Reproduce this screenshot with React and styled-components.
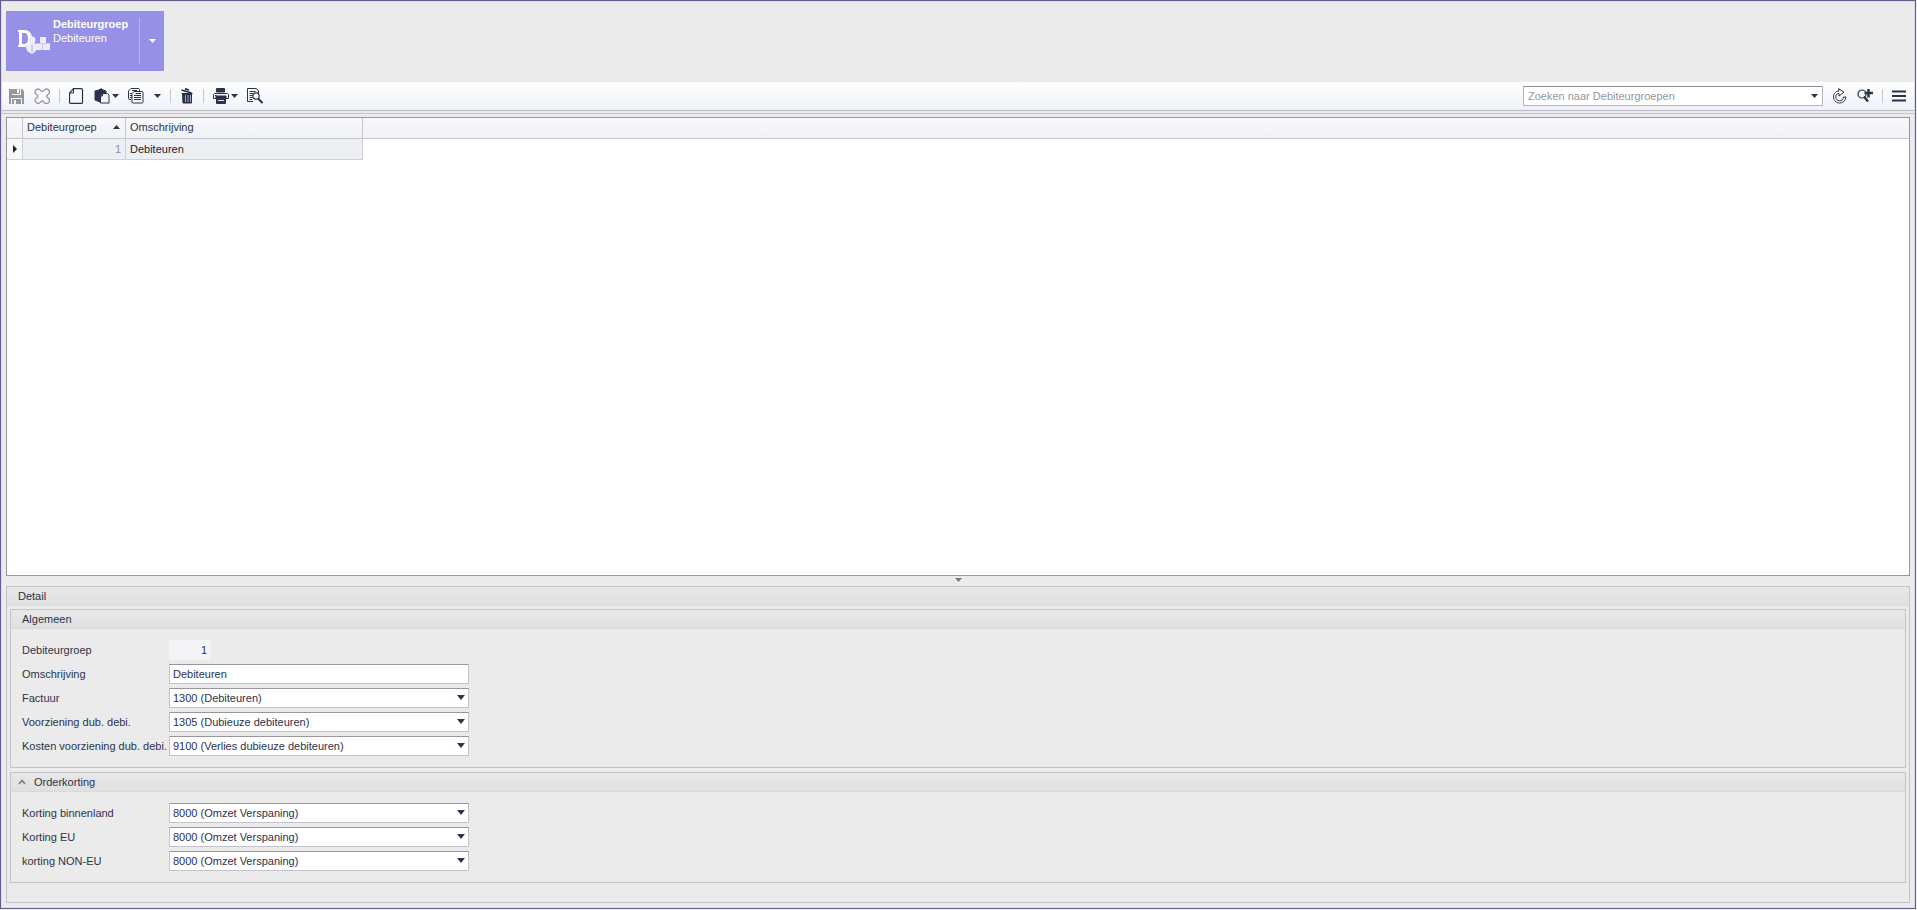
import React, { useState } from "react";
import styled, { createGlobalStyle } from "styled-components";

const generalFields = [
  { id: "factuur", label: "Factuur", value: "1300 (Debiteuren)" },
  { id: "voorziening", label: "Voorziening dub. debi.", value: "1305 (Dubieuze debiteuren)" },
  { id: "kosten", label: "Kosten voorziening dub. debi.", value: "9100 (Verlies dubieuze debiteuren)" },
];

const discountFields = [
  { id: "binnenland", label: "Korting binnenland", value: "8000 (Omzet Verspaning)" },
  { id: "eu", label: "Korting EU", value: "8000 (Omzet Verspaning)" },
  { id: "non-eu", label: "korting NON-EU", value: "8000 (Omzet Verspaning)" },
];

const Caret = ({ width = 7, up }) => (
  <svg width={width} height={width === 7 ? 4 : 5} viewBox="0 0 8 5" preserveAspectRatio="none" aria-hidden="true">
    <path d={up ? "M0 5h8L4 0z" : "M0 0h8L4 5z"} fill="currentColor" />
  </svg>
);

const Icon = ({ width = 16, children }) => (
  <svg width={width} height="16" viewBox={`0 0 ${width} 16`} fill="none" stroke="currentColor" aria-hidden="true">
    {children}
  </svg>
);

const SaveIcon = () => (
  <Icon>
    <path d="M0 1h3v6h9V1h1l2 2v13h-2v-6H2v6H0z" fill="currentColor" stroke="none" />
    <path d="M3 1h8v5H3zM3 11h9v5H3z" fill="currentColor" stroke="none" />
    <path d="M8 1h2v4H8zM5 12h2v4H5z" fill="#f8f8fc" stroke="none" />
  </Icon>
);

const CancelIcon = () => (
  <Icon>
    <path d="M4.500 1C6 1 7 3.500 8.200 3.500S10.500 1 12 1c2 0 3.500 1.500 3.500 3.200S12.500 7 12.500 8.200s3 2.300 3 4S14 15.500 12 15.500s-2.500-2.500-3.800-2.500S6 15.500 4.500 15.500s-3.500-1.500-3.500-3.300 3-2.800 3-4-3-2.200-3-4S2.500 1 4.500 1z" strokeWidth="1.300" />
  </Icon>
);

const NewIcon = () => (
  <Icon>
    <path d="M4.500.6h8q1 0 1 1v12.800q0 1-1 1h-11q-1 0-1-1V5z" strokeWidth="1.200" />
    <path d="M.8 5H4.500V1" />
  </Icon>
);

const PasteIcon = () => (
  <Icon>
    <path d="M1 3l4-1 1-1h2l1 1 3 1v2H9L6 8v6L1 12z" fill="currentColor" />
    <path d="M8.500 5.500h5l1.500 1.500v8H6.500V8z" fill="#f4f4f8" />
    <path d="M6.500 8h2V5.500" />
  </Icon>
);

const CopyIcon = () => (
  <Icon>
    <path d="M11.500 3V1.500q0-1-1-1H3L.5 3v7.500q0 1 1 1H3" />
    <path d="M6 3.500h8q1 0 1 1v9.500q0 1-1 1H5q-1 0-1-1V5.500z" fill="#fafafd" />
    <path d="M6 7.500h7M6 9.500h7M6 11.500h7M7.500 5.500H13M2 5.500h2M2 7.500h2M2 9.500h2M4 2.500h5" />
  </Icon>
);

const TrashIcon = () => (
  <Icon width={14}>
    <path d="M1.500 2l10 3M5 .8l4 1.200" strokeWidth="1.800" />
    <path d="M2.500 6h9v9H3z" fill="currentColor" />
    <path d="M5.500 7v7M8 7v7M10.500 7v7" stroke="#c3c5d0" strokeWidth=".8" />
    <path d="M1.500 5.500h11" />
  </Icon>
);

const PrintIcon = () => (
  <Icon>
    <path d="M3.500 4V.5h8V4z" fill="currentColor" />
    <path d="M1.500 5.500h13l1 1v4h-15v-4z" fill="#f4f4f8" />
    <path d="M3 8h10v2H3z" fill="currentColor" />
    <path d="M3.500 10.500h9v5h-9z" fill="currentColor" />
    <path d="M5 12.500h6" stroke="#dfe0e7" />
    <path d="M2 7.500h1.500" />
  </Icon>
);

const PreviewIcon = () => (
  <Icon>
    <path d="M6 13.500H.5V.5h9L11.500 3v2" />
    <path d="M2.500 3.500h6M2.500 5.500h4M2.500 7.500h3M2.500 9.500h3M2.500 11.500h3" />
    <circle cx="9" cy="8" r="3.200" fill="#fafafd" strokeWidth="1.200" />
    <path d="M11 10.500l4.500 4.500" strokeWidth="2" />
  </Icon>
);

const RefreshIcon = () => (
  <Icon>
    <path d="M7 3C3.500 3 1.500 6 1.500 9c0 3.500 3 6 6 6s6-2 6.500-6h-2.500c-.2 2.500-1.800 3.800-4 3.800S3.800 11 3.800 9 5 5.500 7 5.300V8l5-3.800L6.500.6z" fill="#fafafd" />
  </Icon>
);

const AdvancedSearchIcon = () => (
  <Icon>
    <circle cx="5" cy="6" r="4" fill="#fafafd" strokeWidth="1.200" />
    <path d="M7 8.500l4 5" strokeWidth="2.400" />
    <path d="M11.500 1v8.500M7.500 5H16" strokeWidth="2.500" />
  </Icon>
);

const MenuIcon = () => (
  <Icon width={14}>
    <path d="M0 3.500h14M0 8h14M0 12.500h14" strokeWidth="2" />
  </Icon>
);

const GroupLogo = () => (
  <svg width="32" height="26" viewBox="0 0 32 26" aria-hidden="true">
    <path
      fillRule="evenodd"
      fill="#fff"
      d="M0 2h6c5 0 8 3 8 8.500S11 19 6 19H0v-2h1V4H0zM4 5v11h2c3 0 4-2 4-5.500S9 5 6 5z"
    />
    <g fill="#eeecfb">
      <circle cx="14" cy="12" r="3.500" />
      <circle cx="11" cy="19" r="3" />
      <path d="M9 18l4-4h3l2 3v6l-4 3-5-3z" />
      <path d="M22 9h6v6h-6zM18 16h6v6h-6zM25 16h7v6h-7z" />
    </g>
    <path d="M14 17v7" stroke="#aba7ec" fill="none" />
    <path d="M18 15.500h14M24.500 16v6" stroke="#c9c6f4" fill="none" />
  </svg>
);

const SelectField = ({ id, label, value }) => (
  <FieldRow>
    <FieldLabel htmlFor={id}>{label}</FieldLabel>
    <SelectWrap>
      <Select id={id} defaultValue={value}>
        <option>{value}</option>
      </Select>
      <Caret width={8} />
    </SelectWrap>
  </FieldRow>
);

const App = () => {
  const [search, setSearch] = useState("");
  const [description, setDescription] = useState("Debiteuren");
  const [isOpenDiscount, setIsOpenDiscount] = useState(true);

  return (
    <>
      <GlobalStyle />
      <Window>
        <Ribbon>
          <Tile>
            <TileMain type="button">
              <GroupLogo />
              <TileText>
                <strong>Debiteurgroep</strong>
                <span>Debiteuren</span>
              </TileText>
            </TileMain>
            <TileMenu type="button" aria-label="Debiteurgroep menu">
              <Caret />
            </TileMenu>
          </Tile>
        </Ribbon>

        <Toolbar>
          <ToolButton type="button" aria-label="Opslaan" disabled><SaveIcon /></ToolButton>
          <ToolButton type="button" aria-label="Annuleren" disabled><CancelIcon /></ToolButton>
          <Separator />
          <ToolButton type="button" aria-label="Nieuw"><NewIcon /></ToolButton>
          <ToolButton type="button" aria-label="Plakken"><PasteIcon /><Caret /></ToolButton>
          <ToolButton type="button" aria-label="Kopiëren" $gap={10}><CopyIcon /><Caret /></ToolButton>
          <Separator />
          <ToolButton type="button" aria-label="Verwijderen"><TrashIcon /></ToolButton>
          <Separator />
          <ToolButton type="button" aria-label="Afdrukken"><PrintIcon /><Caret /></ToolButton>
          <ToolButton type="button" aria-label="Voorbeeld"><PreviewIcon /></ToolButton>
          <SearchBox>
            <SearchInput
              aria-label="Zoeken"
              placeholder="Zoeken naar Debiteurgroepen"
              value={search}
              onChange={(e) => setSearch(e.target.value)}
            />
            <SearchToggle type="button" aria-label="Zoekgeschiedenis"><Caret /></SearchToggle>
          </SearchBox>
          <ToolButton type="button" aria-label="Vernieuwen"><RefreshIcon /></ToolButton>
          <ToolButton type="button" aria-label="Uitgebreid zoeken"><AdvancedSearchIcon /></ToolButton>
          <Separator />
          <ToolButton type="button" aria-label="Menu"><MenuIcon /></ToolButton>
        </Toolbar>

        <Content>
          <GridPanel>
            <Table>
              <colgroup>
                <MarkerCol />
                <CodeCol />
                <NameCol />
                <col />
              </colgroup>
              <thead>
                <tr>
                  <HeadCell />
                  <HeadCell aria-sort="ascending">
                    <HeadContent>Debiteurgroep<Caret up /></HeadContent>
                  </HeadCell>
                  <HeadCell>Omschrijving</HeadCell>
                  <HeadCell />
                </tr>
              </thead>
              <tbody>
                <tr>
                  <MarkerCell>
                    <svg width="4" height="8" viewBox="0 0 4 8" aria-hidden="true">
                      <path d="M0 0v8l4-4z" fill="currentColor" />
                    </svg>
                  </MarkerCell>
                  <Cell $number>1</Cell>
                  <Cell>Debiteuren</Cell>
                </tr>
              </tbody>
            </Table>
          </GridPanel>

          <Splitter type="button" aria-label="Detail inklappen"><Caret /></Splitter>

          <DetailPanel>
            <PanelTitle>Detail</PanelTitle>
            <Groups>
              <Group>
                <PanelTitle>Algemeen</PanelTitle>
                <Fields>
                  <FieldRow>
                    <FieldLabel htmlFor="code">Debiteurgroep</FieldLabel>
                    <CodeInput id="code" value="1" readOnly />
                  </FieldRow>
                  <FieldRow>
                    <FieldLabel htmlFor="omschrijving">Omschrijving</FieldLabel>
                    <TextInput
                      id="omschrijving"
                      value={description}
                      onChange={(e) => setDescription(e.target.value)}
                    />
                  </FieldRow>
                  {generalFields.map((field) => (
                    <SelectField key={field.id} {...field} />
                  ))}
                </Fields>
              </Group>
              <Group>
                <GroupToggle
                  type="button"
                  aria-expanded={isOpenDiscount}
                  onClick={() => setIsOpenDiscount(!isOpenDiscount)}
                >
                  <svg width="8" height="6" viewBox="0 0 8 6" fill="none" stroke="#77777f" aria-hidden="true">
                    <path d={isOpenDiscount ? "M1 5l3-3.500L7 5" : "M1 1l3 3.500L7 1"} strokeWidth="1.500" />
                  </svg>
                  Orderkorting
                </GroupToggle>
                {isOpenDiscount && (
                  <Fields>
                    {discountFields.map((field) => (
                      <SelectField key={field.id} {...field} />
                    ))}
                  </Fields>
                )}
              </Group>
            </Groups>
          </DetailPanel>
        </Content>
      </Window>
    </>
  );
};

export default App;

const GlobalStyle = createGlobalStyle`
  * {
    box-sizing: border-box;
  }

  body {
    margin: 0;
    background: #ededf6;
    color: #2b3349;
    font: 11px/14px "Liberation Sans", Arial, sans-serif;
  }

  button, input, select {
    margin: 0;
    padding: 0;
    border: 0;
    border-radius: 0;
    background: none;
    color: inherit;
    font: inherit;
  }

  svg {
    display: block;
    flex: none;
  }
`;

const Window = styled.div`
  display: flex;
  flex-direction: column;
  min-height: calc(100vh - 1px);
  margin-right: 1px;
  border: 1px solid #625c90;
  background: #ebebeb;
  box-shadow: inset 0 0 0 1px #dcdaf0;
`;

const Ribbon = styled.header`
  padding: 10px 5px 11px;
`;

const Tile = styled.div`
  display: flex;
  align-items: center;
  width: 158px;
  height: 60px;
  background: #9691e6;
  color: #fff;
`;

const TileMain = styled.button`
  display: flex;
  align-items: center;
  gap: 3px;
  flex: 1;
  height: 48px;
  padding-left: 12px;
  text-align: left;
`;

const TileText = styled.span`
  display: flex;
  flex-direction: column;
  align-self: flex-start;

  > strong {
    white-space: nowrap;
  }
`;

const TileMenu = styled.button`
  display: flex;
  align-items: center;
  justify-content: center;
  width: 25px;
  height: 46px;
  border-left: 1px solid #b9b5f0;
`;

const Toolbar = styled.div`
  display: flex;
  align-items: center;
  gap: 9px;
  height: 29px;
  margin: 0 1px;
  padding: 0 8px 0 7px;
  border-bottom: 1px solid #babac6;
  background: linear-gradient(#fff, #f1f2f8);
`;

const ToolButton = styled.button`
  display: flex;
  align-items: center;
  gap: ${({ $gap }) => $gap || 2}px;
  color: #2b3349;

  &:disabled {
    color: #95959f;
  }
`;

const Separator = styled.span`
  width: 1px;
  height: 14px;
  background: #c6c6cf;
`;

const SearchBox = styled.div`
  display: flex;
  width: 300px;
  height: 20px;
  margin-left: auto;
  border: 1px solid #b5b5bd;
  border-top-color: #8e8e96;
  background: #fff;
`;

const SearchInput = styled.input`
  flex: 1;
  min-width: 0;
  padding-left: 4px;
  outline: none;

  &::placeholder {
    color: #96969e;
    opacity: 1;
  }
`;

const SearchToggle = styled.button`
  display: flex;
  align-items: center;
  padding: 0 4px;
`;

const Content = styled.main`
  display: flex;
  flex-direction: column;
  flex: 1;
  margin: 2px 1px 0;
  padding: 3px 4px 5px;
  border-top: 1px solid #c4c4cc;
`;

const GridPanel = styled.section`
  flex: 1;
  border: 1px solid #96969c;
  background: #fff;
`;

const Table = styled.table`
  width: 100%;
  border-collapse: separate;
  border-spacing: 0;
  table-layout: fixed;
`;

const MarkerCol = styled.col`
  width: 16px;
`;

const CodeCol = styled.col`
  width: 103px;
`;

const NameCol = styled.col`
  width: 237px;
`;

const HeadCell = styled.th`
  height: 21px;
  padding: 0 4px 2px;
  border-right: 1px solid #c6c6cf;
  border-bottom: 1px solid #c6c6cf;
  background: linear-gradient(#f8f9fc, #f1f2f5);
  font-weight: normal;
  text-align: left;

  &:last-child {
    border-right: 0;
  }
`;

const HeadContent = styled.span`
  display: flex;
  align-items: center;
  justify-content: space-between;
  padding-right: 1px;
`;

const Cell = styled.td`
  height: 21px;
  padding: 0 4px;
  border-right: 1px solid #d0d0d8;
  border-bottom: 1px solid #d0d0d8;
  background: #eeeff2;
  color: ${({ $number }) => ($number ? "#8f8f97" : "#1d1d2b")};
  text-align: ${({ $number }) => ($number ? "right" : "left")};
`;

const MarkerCell = styled(Cell)`
  padding-left: 6px;
  background: #f7f8fa;
`;

const Splitter = styled.button`
  display: flex;
  align-items: center;
  justify-content: center;
  height: 10px;
  padding-bottom: 2px;
  color: #77777f;
`;

const DetailPanel = styled.section`
  border: 1px solid #c3c4cb;
`;

const PanelTitle = styled.h2`
  height: 19px;
  margin: 0;
  padding-left: 11px;
  border-bottom: 1px solid #dadada;
  background: linear-gradient(#e8e8e8, #e0e0e0);
  font-size: 11px;
  font-weight: normal;
  line-height: 18px;
`;

const Groups = styled.div`
  display: flex;
  flex-direction: column;
  gap: 4px;
  padding: 3px 3px 19px;
`;

const Group = styled.section`
  border: 1px solid #c3c4cb;
`;

const GroupToggle = styled.button`
  display: flex;
  align-items: center;
  gap: 8px;
  width: 100%;
  height: 19px;
  padding-left: 7px;
  border-bottom: 1px solid #dadada;
  background: linear-gradient(#e8e8e8, #e0e0e0);
`;

const Fields = styled.div`
  display: flex;
  flex-direction: column;
  gap: 4px;
  padding: 11px;
`;

const FieldRow = styled.div`
  display: flex;
  align-items: center;
  height: 20px;
`;

const FieldLabel = styled.label`
  width: 147px;
  white-space: nowrap;
`;

const TextInput = styled.input`
  width: 300px;
  height: 20px;
  padding: 0 3px 1px;
  border: 1px solid #c3c4cb;
  border-top-color: #96969c;
  background: #fff;
`;

const CodeInput = styled(TextInput)`
  width: 42px;
  border-color: #f4f4f7;
  background: #f4f4f7;
  text-align: right;
`;

const SelectWrap = styled.div`
  display: grid;
  align-items: center;
  width: 300px;

  > * {
    grid-area: 1 / 1;
  }

  > svg {
    justify-self: end;
    margin: 0 4px 2px 0;
    pointer-events: none;
  }
`;

const Select = styled.select`
  width: 100%;
  height: 20px;
  padding: 0 16px 1px 3px;
  border: 1px solid #c3c4cb;
  border-top-color: #96969c;
  background: #fff;
  appearance: none;
`;
